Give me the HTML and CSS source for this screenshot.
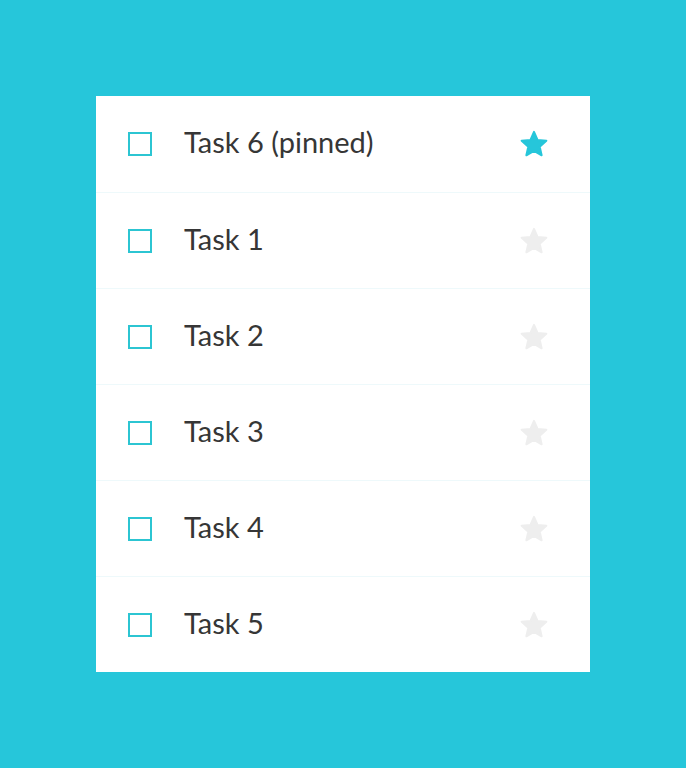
FILE: index.html
```html
<!DOCTYPE html>
<html>
<head>
<meta charset="utf-8">
<link rel="stylesheet" href="styles.css">
</head>
<body>
<div class="page">
  <ul class="list">
    <li class="item">
      <span class="check"></span>
      <span class="title">Task 6 (pinned)</span>
      <svg class="star pinned" viewBox="0 0 28 28"><polygon points="14,1.8 17.53,9.95 26.36,10.78 19.71,16.65 21.64,25.32 14,20.8 6.36,25.32 8.29,16.65 1.64,10.78 10.47,9.95"/></svg>
    </li>
    <li class="item">
      <span class="check"></span>
      <span class="title">Task 1</span>
      <svg class="star" viewBox="0 0 28 28"><polygon points="14,1.8 17.53,9.95 26.36,10.78 19.71,16.65 21.64,25.32 14,20.8 6.36,25.32 8.29,16.65 1.64,10.78 10.47,9.95"/></svg>
    </li>
    <li class="item">
      <span class="check"></span>
      <span class="title">Task 2</span>
      <svg class="star" viewBox="0 0 28 28"><polygon points="14,1.8 17.53,9.95 26.36,10.78 19.71,16.65 21.64,25.32 14,20.8 6.36,25.32 8.29,16.65 1.64,10.78 10.47,9.95"/></svg>
    </li>
    <li class="item">
      <span class="check"></span>
      <span class="title">Task 3</span>
      <svg class="star" viewBox="0 0 28 28"><polygon points="14,1.8 17.53,9.95 26.36,10.78 19.71,16.65 21.64,25.32 14,20.8 6.36,25.32 8.29,16.65 1.64,10.78 10.47,9.95"/></svg>
    </li>
    <li class="item">
      <span class="check"></span>
      <span class="title">Task 4</span>
      <svg class="star" viewBox="0 0 28 28"><polygon points="14,1.8 17.53,9.95 26.36,10.78 19.71,16.65 21.64,25.32 14,20.8 6.36,25.32 8.29,16.65 1.64,10.78 10.47,9.95"/></svg>
    </li>
    <li class="item">
      <span class="check"></span>
      <span class="title">Task 5</span>
      <svg class="star" viewBox="0 0 28 28"><polygon points="14,1.8 17.53,9.95 26.36,10.78 19.71,16.65 21.64,25.32 14,20.8 6.36,25.32 8.29,16.65 1.64,10.78 10.47,9.95"/></svg>
    </li>
  </ul>
</div>
</body>
</html>
```
FILE: styles.css
```css
html, body {
  margin: 0;
  padding: 0;
  background: #26c6da;
}
.page {
  padding: 96px;
  font-family: Lato, "Open Sans", sans-serif;
}
.list {
  list-style: none;
  margin: 0;
  padding: 0;
  width: 494px;
  background: #fff;
}
.item {
  display: flex;
  align-items: center;
  height: 96px;
  box-sizing: border-box;
  padding: 0 42px 0 32px;
}
.item + .item {
  border-top: 1px solid #eef9fb;
}
.check {
  width: 24px;
  height: 24px;
  box-sizing: border-box;
  border: 2px solid #2cc5d2;
  flex: none;
  margin-right: 32px;
}
.title {
  flex: 1;
  font-size: 29px;
  color: #363636;
  line-height: 1;
  padding-bottom: 5px;
}
.star {
  width: 28px;
  height: 28px;
  flex: none;
}
.star polygon {
  fill: #eeeeee;
  stroke: #eeeeee;
  stroke-width: 2;
  stroke-linejoin: round;
}
.star.pinned polygon {
  fill: #26c6da;
  stroke: #26c6da;
}
```
